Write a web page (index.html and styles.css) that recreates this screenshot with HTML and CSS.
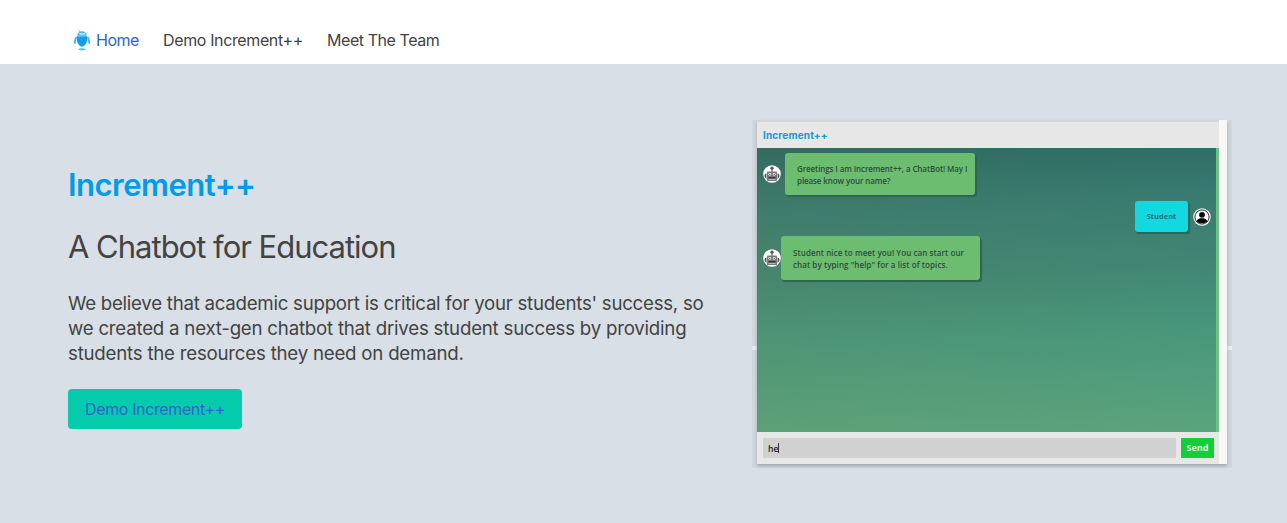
FILE: index.html
```
<!DOCTYPE html>
<html lang="en">
<head>
<meta charset="utf-8">
<title>Increment++</title>
<link rel="stylesheet" href="styles.css">
</head>
<body>
<svg class="defs" width="0" height="0" aria-hidden="true">
  <symbol id="robot" viewBox="0 0 18 18">
    <circle cx="9" cy="9" r="8.8" fill="#fff"/>
    <circle cx="9" cy="3.2" r="1.6" fill="#684650"/>
    <path d="M9 4v3" stroke="#684650" stroke-width="1"/>
    <path d="M3.400 8.500Q1.300 8.600 1.700 11.800L3.400 14zM14.600 8.500Q16.700 8.600 16.300 11.800L14.600 14z" fill="#494b4d"/>
    <rect x="4" y="6.500" width="10" height="9.500" rx="1" fill="#77797b"/>
    <circle cx="6.8" cy="9.3" r="1.4" fill="#eee"/>
    <circle cx="11.2" cy="9.3" r="1.4" fill="#eee"/>
    <circle cx="6.8" cy="9.3" r=".6" fill="#333"/>
    <circle cx="11.2" cy="9.3" r=".6" fill="#333"/>
    <path d="M5.500 12.700h7" stroke="#333" stroke-width="1.300"/>
    <path d="M5.500 14.500h7" stroke="#bbb" stroke-width=".9"/>
  </symbol>
</svg>
<header class="navbar">
  <a class="nav-link nav-home">
    <svg class="logo" viewBox="0 0 16 22">
      <path d="M4.900 .800L6 4" stroke="#7ccaf5" stroke-width=".9"/>
      <path d="M3.200 6.800C3.400 .800 12.600 .800 12.800 6.800z" fill="#43b6f3"/>
      <path d="M5.500 4.200q2.800 1.800 5.600 0" stroke="#e3f5ff" stroke-width="1.300" fill="none"/>
      <path d="M2.700 7.200h10.600c.5 4-1 9.600-5.300 10.600-4.300-1-5.800-6.600-5.300-10.600z" fill="#109fe9"/>
      <path d="M2.300 8C1 9.500 1.200 12 .500 14.800M13.700 8c1.300 1.500 1.100 4 1.800 6.800" stroke="#45b6f3" stroke-width="1.900" fill="none"/>
      <ellipse cx="8" cy="20.300" rx="3.600" ry="1.100" fill="#4fc3f5"/>
    </svg>
    <span>Home</span>
  </a>
  <a class="nav-link">Demo Increment++</a>
  <a class="nav-link nav-team">Meet The Team</a>
</header>
<main class="hero">
  <section class="intro">
    <h1 class="title">Increment++</h1>
    <h2 class="subtitle">A Chatbot for Education</h2>
    <p class="pitch"><span class="line l1">We believe that academic support is critical for your students' success, so</span><span class="line">we created a next-gen chatbot that drives student success by providing</span><span class="line">students the resources they need on demand.</span></p>
    <a class="cta">Demo Increment++</a>
  </section>
  <section class="preview">
    <div class="window">
      <div class="chat">
        <div class="chat-head">Increment++</div>
        <div class="messages">
          <div class="row first">
            <svg class="avatar"><use href="#robot"/></svg>
            <div class="bubble greet"><span class="line">Greetings I am Increment++, a ChatBot! May I</span><span class="line">please know your name?</span></div>
          </div>
          <div class="row user">
            <div class="bubble student">Student</div>
            <svg class="avatar" viewBox="0 0 18 18">
              <circle cx="9" cy="9" r="8.700" fill="#fff"/>
              <circle cx="9" cy="9" r="7.100" fill="#fff" stroke="#272c2d" stroke-width="1"/>
              <circle cx="9" cy="6.800" r="2.900" fill="#080808"/>
              <path d="M3.800 13.300c.7-2.700 2.900-3 5.200-3s4.500.3 5.200 3C12.500 16 5.500 16 3.800 13.300z" fill="#080808"/>
            </svg>
          </div>
          <div class="row second">
            <svg class="avatar"><use href="#robot"/></svg>
            <div class="bubble reply"><span class="line">Student nice to meet you! You can start our</span><span class="line">chat by typing "help" for a list of topics.</span></div>
          </div>
        </div>
        <div class="composer">
          <div class="field">he<i class="caret"></i></div>
          <div class="send">Send</div>
        </div>
      </div>
    </div>
  </section>
</main>
</body>
</html>
```
FILE: styles.css
```
* { box-sizing: border-box; }
body { margin: 0; background: #d8dfe6; color: #434343; font-family: Inter, sans-serif; }
.defs { position: absolute; }
.navbar { height: 64px; padding: 16px 74px 0; background: #fff; display: flex; align-items: center; }
.nav-link { font-size: 16px; letter-spacing: -.37px; white-space: nowrap; margin-right: 24px; width: 140px; }
.nav-home { display: flex; align-items: center; gap: 6px; color: #2f63d4; width: 65px; letter-spacing: -.5px; }
.nav-team { width: auto; letter-spacing: -.43px; }
.logo { width: 16px; height: 22px; flex: none; }
.hero { height: 459px; padding: 56px 55px 0 68px; display: flex; justify-content: space-between; align-items: flex-start; }
.intro { padding-top: 45px; width: 650px; }
.title, .subtitle { margin: 0; font-size: 31px; line-height: 40px; white-space: nowrap; }
.title { color: #009be9; font-weight: 600; letter-spacing: -.5px; }
.subtitle { font-weight: 400; margin-top: 22px; letter-spacing: -1px; }
.pitch { margin: 24px 0 0; font-size: 18.700px; line-height: 25px; letter-spacing: -.23px; }
.l1 { letter-spacing: -.27px; }
.line { display: block; white-space: nowrap; }
.cta { display: flex; align-items: center; margin-top: 23px; width: 174px; height: 40px; padding-left: 17px; border-radius: 4px; background: #04cbab; color: #2f63d4; font-size: 16px; letter-spacing: -.37px; white-space: nowrap; }
.preview { width: 480px; height: 348px; padding: 0 5px 4px; background: linear-gradient(transparent 226px, #e9edef 226px, #e9edef 230px, transparent 230px), #d0d7dc; }
.window { width: 470px; height: 344px; padding-right: 8px; background: #f8f8f8; box-shadow: 0 2px 3px #a0a8af; }
.chat { width: 462px; height: 344px; border-top: 2px solid #d2d7da; background: #e7e7e7; font-family: "Open Sans", sans-serif; }
.chat-head { height: 26px; padding-left: 6px; color: #129bd5; font: 700 10px/26px Inter, sans-serif; letter-spacing: .14px; }
.messages { height: 284px; padding: 5px 6px 0 6px; border-right: 3px solid #6fc183; background: linear-gradient(90deg, rgba(94,145,100,.18), rgba(50,150,140,.12)), linear-gradient(178deg, #2b635d 0%, #38776d 20%, #438570 45%, #4b967a 65%, #60a67b 100%); }
.row { display: flex; align-items: center; }
.avatar { width: 18px; height: 18px; flex: none; }
.bubble { flex: none; border-radius: 3px; background: #6dbd70; color: #295039; font-size: 8px; font-weight: 600; line-height: 12px; box-shadow: 1.500px 2px 1px #2d6653; }
.greet { width: 190px; height: 42px; margin-left: 4px; padding: 10px 0 0 12px; letter-spacing: -.1px; }
.user { justify-content: flex-end; margin: 6px -1px 0 0; gap: 5px; }
.student { width: 53px; height: 31px; line-height: 31px; text-align: center; background: #13d8df; color: #267178; font-weight: 700; font-size: 7.500px; }
.second { margin-top: 4px; }
.reply { width: 199px; height: 44px; padding: 11px 0 0 12px; letter-spacing: .08px; }
.composer { height: 32px; padding: 6px 5px 6px 6px; display: flex; justify-content: space-between; }
.field { width: 413px; height: 20px; padding-left: 5px; display: flex; align-items: center; background: #d1d1d1; border-radius: 1px; color: #222; font-size: 8.500px; font-weight: 600; }
.caret { width: 1px; height: 10px; background: #333; }
.send { width: 33px; height: 20px; line-height: 20px; border-radius: 1px; background: #13ce38; color: #d9ffdd; font-size: 9px; font-weight: 700; text-align: center; }
```
